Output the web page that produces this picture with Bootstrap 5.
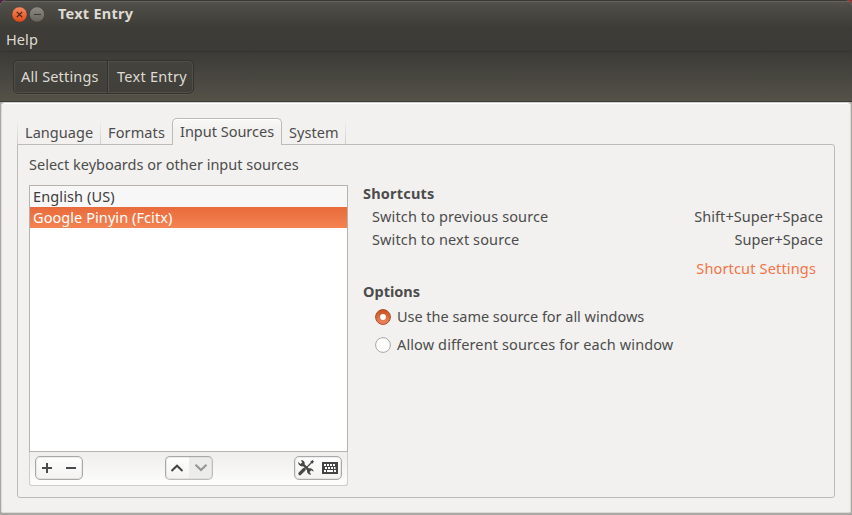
<!DOCTYPE html>
<html lang="en">
<head>
<meta charset="utf-8">
<meta name="viewport" content="width=device-width, initial-scale=1">
<title>Text Entry</title>
<link href="https://cdn.jsdelivr.net/npm/bootstrap@5.3.0/dist/css/bootstrap.min.css" rel="stylesheet">
<script src="https://cdn.jsdelivr.net/npm/bootstrap@5.3.0/dist/js/bootstrap.bundle.min.js" defer></script>
<style>
html, body { height: 100%; }
body { font: 400 14.5px/20px "Noto Sans", "Open Sans", sans-serif; color: #4c4c4c; background: linear-gradient(90deg, #5a1a48 0 6px, #3c3b37 6px calc(100% - 6px), #a02a2e calc(100% - 6px)); overflow: hidden; white-space: nowrap; }
.window { height: 515px; background: #a9a7a4; padding: 0 1px 2px; border-radius: 6px 6px 0 0; overflow: hidden; }
.window-head { height: 102px; margin: 0 -1px; padding: 0 1px; color: #dfdbd2; border-top: 1px solid #3a3935; border-bottom: 1px solid #3c3b36; background: linear-gradient(#53524d 0, #4c4b46 7px, #3d3c37 27px, #3c3b37 50px, #403f3a 60px, #545148 100px); box-shadow: inset 0 1px #65635d; }
.titlebar { height: 27px; padding: 2px 0 0 10px; }
.title-text { margin-left: 13px; }
.wm-btn { width: 17px; height: 17px; margin-top: 3px; }
.menubar { height: 24px; padding: 1px 0 0 5px; border-bottom: 1px solid #34332f; }
.toolbar { padding: 8px 0 0 12px; }
.crumbs { width: 181px; height: 34px; border: 1px solid #33322e; border-radius: 5px; background: linear-gradient(#44433e, #403f3a); box-shadow: inset 0 0 0 1px #504f49, 0 1px #5a584f; }
.crumb { color: #dfdbd2; padding: 0 0 3px 7px; font: inherit; border: 0; text-align: left; border-radius: 0; }
.crumb:hover { color: #fff; }
.crumb-first { width: 94px; border-right: 1px solid #33322e; }
.crumb-last { padding-left: 9px; box-shadow: inset 1px 0 #54534d; }
.window-body { height: 411px; background: #f2f1ef; border: 1px solid #dcdad7; border-top-color: #d2d0cb; border-radius: 4px 4px 2px 2px; padding: 15px 15px 0; box-shadow: inset 0 1px #fff; }
.tabs { height: 27px; margin-bottom: -1px; border: 0; }
.tabs .tab { font: inherit; line-height: 20px; color: #4c4c4c; border: 0; border-radius: 0; margin: 0 0 1px; padding: 2px 0 0 7px; height: 24px; border-right: 1px solid; border-image: linear-gradient(#f2f1ef, #cfcdca) 1; }
.tabs .tab.active { margin: 0; border: 1px solid #bdbbb7; border-image: none; border-bottom: 0; border-radius: 5px 5px 0 0; background: linear-gradient(#f8f8f7, #f2f1ef 12px); height: 27px; color: #4c4c4c; box-shadow: inset 0 1px #fff; }
.tabs .w-lang { width: 84px; border-left: 1px solid; }
.w-form { width: 71px; }
.tabs .w-form { border-right: 0; }
.w-input { width: 110px; }
.w-sys { width: 64px; }
.pane { height: 354px; border: 1px solid #bdbbb7; border-radius: 0 3px 3px 3px; padding: 9px 10px 0 11px; }
.pane-row { margin-top: 11px; }
.source-box { width: 319px; height: 301px; }
.source-list { height: 267px; background: #fff; border: 1px solid #b6b3ae; border-radius: 0; }
.source-row { height: 21px; line-height: 21px; padding: 0 3px; border: 0; color: #3c3c3c; background: #f7f7f7; }
.source-list .source-row.active { margin-top: 0; background: linear-gradient(#e86b3b, #f58252); color: #fff; }
.source-tools { height: 34px; border: 1px solid #cfcdc9; border-top: 0; border-radius: 0 0 3px 3px; background: linear-gradient(#efeeec, #fdfdfc); padding: 4px 5px 0; }
.tool-pair { width: 48px; height: 24px; border: 1px solid #a9a9a7; border-radius: 5px; background: linear-gradient(#fff, #f3f2f1); box-shadow: inset 0 0 0 1px rgba(200,200,198,.35); overflow: hidden; }
.tool-pair svg { display: block; width: 46px; height: 22px; }
.mid-gap { margin-left: 82px; margin-right: 81px; }
.half-off { background: linear-gradient(90deg, transparent 50%, #ececea 50%), linear-gradient(#fff, #f3f2f1); border-color: #a9a9a7 #bcbcba #bcbcba #a9a9a7; }
.options { width: 461px; margin-left: 15px; margin-top: -2px; }
.opt-row { height: 23px; padding: 0 1px 0 9px; }
.opt-title { height: 23px; font-weight: 700; }
.link-row { height: 23px; margin-top: 6px; padding-right: 8px; }
.link-row a { color: #f37447; text-decoration: none; }
.radio-group { padding: 2px 0 0 12px; }
.radio-row { height: 28px; }
.radio-dot { width: 16px; height: 16px; margin-top: 3px; margin-right: 6px; }
.s-title { letter-spacing: .25px; font-weight: 700; }
.s-help { letter-spacing: .1px; }
.s-all { letter-spacing: .16px; }
.s-text { letter-spacing: .26px; }
.s-lang { letter-spacing: .04px; }
.s-form { letter-spacing: .12px; }
.s-input { letter-spacing: -.01px; }
.s-head { letter-spacing: .2px; }
.s-link { letter-spacing: .16px; }
.s-wide { letter-spacing: .12px; }
.s-list { letter-spacing: .07px; }
.s-same { letter-spacing: -.03px; }
</style>
</head>
<body>
<main class="window">
  <header class="window-head">
    <div class="titlebar d-flex">
      <svg class="wm-btn" viewBox="0 0 17 17"><defs><linearGradient id="gc" x2="0" y2="1"><stop stop-color="#f68a63"/><stop offset="1" stop-color="#dc4a14"/></linearGradient><linearGradient id="gm" x2="0" y2="1"><stop stop-color="#8d8b83"/><stop offset="1" stop-color="#64625b"/></linearGradient></defs><circle cx="8.5" cy="8.5" r="7.7" fill="url(#gc)" stroke="#35342f" stroke-width=".6"/><path d="M5.8 5.8l5.400 5.400m0-5.400l-5.400 5.400" stroke="#4b2112" stroke-width="1.2"/></svg>
      <svg class="wm-btn" viewBox="0 0 17 17"><circle cx="9" cy="8.5" r="7.7" fill="url(#gm)" stroke="#35342f" stroke-width=".6"/><path d="M6 8.500h7" stroke="#3c3b37" stroke-width="1.2"/></svg>
      <span class="title-text s-title">Text Entry</span>
    </div>
    <nav class="menubar"><span class="s-help">Help</span></nav>
    <div class="toolbar">
      <div class="crumbs d-flex">
        <button type="button" class="btn crumb crumb-first s-all">All Settings</button>
        <button type="button" class="btn crumb crumb-last s-text flex-fill">Text Entry</button>
      </div>
    </div>
  </header>
  <section class="window-body">
    <div class="nav nav-tabs tabs flex-nowrap align-items-end position-relative">
      <a class="nav-link tab w-lang s-lang">Language</a>
      <a class="nav-link tab w-form s-form">Formats</a>
      <a class="nav-link tab active w-input s-input">Input Sources</a>
      <a class="nav-link tab w-sys s-lang">System</a>
    </div>
    <div class="pane">
      <div>Select keyboards or other input sources</div>
      <div class="d-flex pane-row">
        <div class="source-box">
          <div class="list-group source-list">
            <div class="list-group-item source-row s-wide">English (US)</div>
            <div class="list-group-item source-row active s-list">Google Pinyin (Fcitx)</div>
          </div>
          <div class="source-tools d-flex">
            <div class="tool-pair"><svg viewBox="0 0 46 22"><path d="M6 11h10M11 6v10M30 11h10" stroke="#4b4b4b" stroke-width="2"/></svg></div>
            <div class="tool-pair half-off mid-gap"><svg viewBox="0 0 46 22" fill="none" stroke-width="2"><path d="M5.500 14l5.500-5.300 5.500 5.300" stroke="#444"/><path d="M29.500 7.700l5.500 5.300 5.500-5.300" stroke="#96948d"/></svg></div>
            <div class="tool-pair"><svg viewBox="0 0 46 22"><g fill="#484848"><path d="M3.200 4.800L5.400 6.900 7.200 5.400 5.800 3.200C8.500 2.800 10.300 5 9.600 7.300L13.600 11.300C16.300 10.800 18.800 12.600 18.600 14.800L16.300 13.300 14.600 14.900 16.200 17.600C13.500 18 11.600 15.800 12 13.200L8.200 9.300C5.500 9.800 3 7.800 3.200 4.800z"/><path d="M15.300 4.800L17.500 3l1.500 1.500-1.700 2.300z"/></g><path d="M17.300 4.800L11.500 10.600" stroke="#484848" stroke-width="1.300"/><path d="M4.900 16.700l4.200-4.200" stroke="#484848" stroke-width="3.200" stroke-linecap="round"/><path fill="#444" d="M27 5h16v12H27z"/><path d="M29 8h12M30 11h10.500" stroke="#fff" stroke-width="2" stroke-dasharray="2 1"/><path d="M29 14h2m1 0h6m1 0h2" stroke="#fff" stroke-width="2"/></svg></div>
          </div>
        </div>
        <div class="options">
          <div class="opt-title"><span class="s-head">Shortcuts</span></div>
          <div class="opt-row d-flex justify-content-between"><span class="s-wide">Switch to previous source</span><span class="s-list">Shift+Super+Space</span></div>
          <div class="opt-row d-flex justify-content-between"><span class="s-wide">Switch to next source</span><span>Super+Space</span></div>
          <div class="link-row text-end"><a href="#" class="s-link">Shortcut Settings</a></div>
          <div class="opt-title"><span>Options</span></div>
          <div class="radio-group">
            <div class="radio-row d-flex"><svg class="radio-dot" viewBox="0 0 16 16"><defs><linearGradient id="gr" x2="0" y2="1"><stop stop-color="#c8501f"/><stop offset="1" stop-color="#ee8a63"/></linearGradient></defs><circle cx="8" cy="8" r="7.400" fill="url(#gr)" stroke="#a84a26"/><circle cx="8" cy="8" r="2.900" fill="#fff"/></svg><span class="s-same">Use the same source for all windows</span></div>
            <div class="radio-row d-flex"><svg class="radio-dot" viewBox="0 0 16 16"><circle cx="8" cy="8" r="7.400" fill="#fff" stroke="#a7a6a3"/></svg><span class="s-wide">Allow different sources for each window</span></div>
          </div>
        </div>
      </div>
    </div>
  </section>
</main>
</body>
</html>
